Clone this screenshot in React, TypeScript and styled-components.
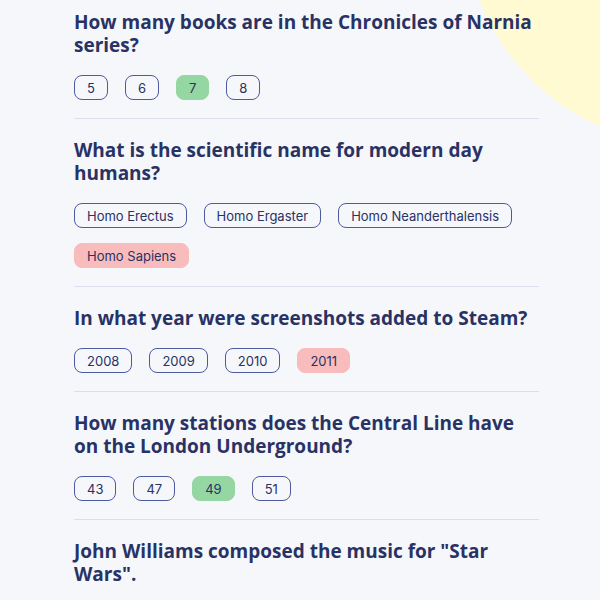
import React from "react";
import styled, { createGlobalStyle } from "styled-components";

const GlobalStyle = createGlobalStyle`
  html, body { margin: 0; padding: 0; }
  body {
    background: #F5F7FB;
    color: #293264;
    font-family: "Inter", "Liberation Sans", sans-serif;
    overflow: hidden;
  }
`;

const Page = styled.main`
  position: relative;
  width: 600px;
  height: 600px;
  overflow: hidden;
  background: #F5F7FB;
`;

const Blob = styled.svg`
  position: absolute;
  top: 0;
  right: 0;
  z-index: 0;
  display: block;
`;

const List = styled.div`
  position: relative;
  z-index: 1;
  margin-left: 74px;
  width: 465px;
  display: flex;
  flex-direction: column;
`;

const Question = styled.section`
  padding: 20px 0 18px;
  border-bottom: 1px solid #DBDEF0;
  &:first-child { padding-top: 11px; }
`;

const Title = styled.h2`
  margin: 0 0 18px;
  font-family: "Open Sans", "Liberation Sans", sans-serif;
  font-weight: 700;
  font-size: 19px;
  line-height: 23px;
  color: #293264;
`;

const Options = styled.div`
  display: flex;
  flex-wrap: wrap;
  gap: 15px 17px;
`;

type Status = "idle" | "correct" | "wrong";

const Option = styled.button<{ $status: Status }>`
  font-family: "Inter", "Liberation Sans", sans-serif;
  font-size: 13px;
  line-height: 16px;
  padding: 3.5px 12px;
  border-radius: 8px;
  color: #293264;
  border: 1px solid
    ${(p) =>
      p.$status === "correct" ? "#94D7A2" : p.$status === "wrong" ? "#F8BCBC" : "#4D5B9E"};
  background: ${(p) =>
    p.$status === "correct" ? "#94D7A2" : p.$status === "wrong" ? "#F8BCBC" : "transparent"};
  cursor: pointer;
`;

const data: { q: string; a: string[]; s: Record<number, Status> }[] = [
  { q: "How many books are in the Chronicles of Narnia series?", a: ["5", "6", "7", "8"], s: { 2: "correct" } },
  {
    q: "What is the scientific name for modern day humans?",
    a: ["Homo Erectus", "Homo Ergaster", "Homo Neanderthalensis", "Homo Sapiens"],
    s: { 3: "wrong" },
  },
  { q: "In what year were screenshots added to Steam?", a: ["2008", "2009", "2010", "2011"], s: { 3: "wrong" } },
  {
    q: "How many stations does the Central Line have on the London Underground?",
    a: ["43", "47", "49", "51"],
    s: { 2: "correct" },
  },
  { q: "John Williams composed the music for \"Star Wars\".", a: ["True", "False"], s: {} },
];

export default function App() {
  return (
    <Page>
      <GlobalStyle />
      <Blob width="150" height="150" viewBox="0 0 150 150">
        <circle cx="240" cy="-80" r="225" fill="#FFFAD1" />
      </Blob>
      <List>
        {data.map((item, i) => (
          <Question key={i}>
            <Title>{item.q}</Title>
            <Options>
              {item.a.map((ans, j) => (
                <Option key={j} $status={item.s[j] ?? "idle"}>
                  {ans}
                </Option>
              ))}
            </Options>
          </Question>
        ))}
      </List>
    </Page>
  );
}
